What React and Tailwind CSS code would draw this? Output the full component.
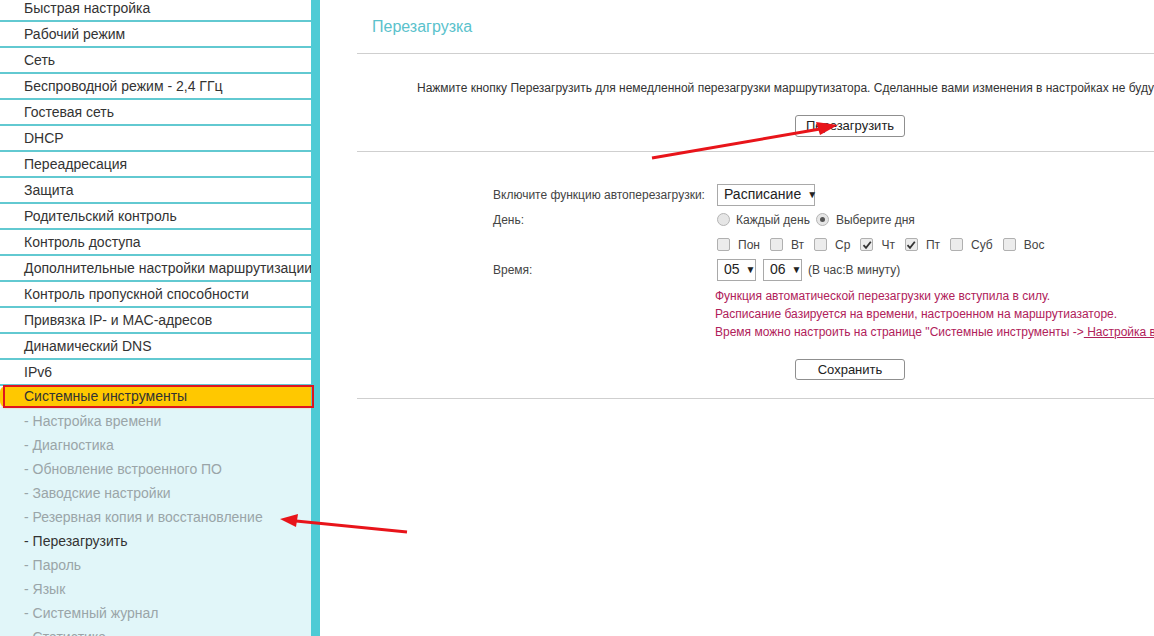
import React from "react";

const menu = [
  "Быстрая настройка",
  "Рабочий режим",
  "Сеть",
  "Беспроводной режим - 2,4 ГГц",
  "Гостевая сеть",
  "DHCP",
  "Переадресация",
  "Защита",
  "Родительский контроль",
  "Контроль доступа",
  "Дополнительные настройки маршрутизации",
  "Контроль пропускной способности",
  "Привязка IP- и MAC-адресов",
  "Динамический DNS",
  "IPv6",
];

const sub = [
  "Настройка времени",
  "Диагностика",
  "Обновление встроенного ПО",
  "Заводские настройки",
  "Резервная копия и восстановление",
  "Перезагрузить",
  "Пароль",
  "Язык",
  "Системный журнал",
  "Статистика",
];

function Radio({ checked }) {
  return (
    <span className="inline-flex w-[13px] h-[13px] rounded-full border border-[#b5b5b5] bg-[#e6e6e6] items-center justify-center">
      {checked && <span className="w-[5px] h-[5px] rounded-full bg-[#555]" />}
    </span>
  );
}

function Check({ checked }) {
  return (
    <span className="inline-flex w-[13px] h-[13px] rounded-[2px] border border-[#b0b0b0] bg-[#ececec] items-center justify-center">
      {checked && (
        <svg width="10" height="10" viewBox="0 0 10 10">
          <path d="M1.5 5.2 L4 7.8 L8.8 1.8" fill="none" stroke="#333" strokeWidth="1.8" />
        </svg>
      )}
    </span>
  );
}

function Sel({ children, w }) {
  return (
    <span className={`inline-flex items-center justify-between h-[22px] border border-[#a9a9a9] bg-white px-[6px] text-[14px] text-[#222] ${w}`}>
      <span>{children}</span>
      <span className="text-[10px] ml-[6px]">▼</span>
    </span>
  );
}

export default function App() {
  const days = [
    ["Пон", false],
    ["Вт", false],
    ["Ср", false],
    ["Чт", true],
    ["Пт", true],
    ["Суб", false],
    ["Вос", false],
  ];
  return (
    <div
      className="relative w-[1154px] h-[636px] overflow-hidden bg-white flex"
      style={{ fontFamily: '"Liberation Sans", Arial, sans-serif' }}
    >
      {/* Sidebar */}
      <div className="w-[320px] shrink-0 h-full flex border-r-[9px] border-[#4ecbd5]">
        <div className="w-[311px] flex flex-col h-full">
          <div className="-mt-[4px]">
            {menu.map((m) => (
              <div
                key={m}
                className="h-[26px] border-b-2 border-[#62c9d1] pl-[24px] flex items-center text-[14px] text-[#333] whitespace-nowrap overflow-hidden"
              >
                {m}
              </div>
            ))}
          </div>
          <div className="relative h-[24px] bg-[#ffc800] rounded-l-[6px] pl-[24px] flex items-center text-[14px] text-[#333] shadow-[0_1px_2px_rgba(230,150,0,0.5)]">
            Системные инструменты
            <div className="absolute left-[3px] -right-[3px] -top-[1px] -bottom-[1px] border-2 border-[#e0141e]" />
          </div>
          <div className="flex-1 bg-[#e1f6f9] pt-[2px]">
            {sub.map((s) => (
              <div
                key={s}
                className={`h-[24px] pl-[24px] flex items-center text-[14px] whitespace-nowrap ${
                  s === "Перезагрузить" ? "text-[#333]" : "text-[#9aa5a8]"
                }`}
              >
                - {s}
              </div>
            ))}
          </div>
        </div>
      </div>

      {/* Main */}
      <div className="flex-1 pl-[37px] overflow-hidden">
        <div className="w-[1000px]">
          <div className="h-[54px] border-b border-[#cfcfcf] pl-[15px] pt-[15px] text-[16px] text-[#5ac2cc]">
            Перезагрузка
          </div>
          <div className="h-[98px] border-b border-[#cfcfcf] relative">
            <div className="pl-[60px] pt-[25px] text-[12px] text-[#333] whitespace-nowrap">
              Нажмите кнопку Перезагрузить для немедленной перезагрузки маршрутизатора. Сделанные вами изменения в настройках не будут потеряны.
            </div>
            <div className="pl-[438px] pt-[16px]">
              <button className="w-[110px] h-[22px] border border-[#8f8f8f] rounded-[3px] bg-white text-[13px] text-[#222]">
                Перезагрузить
              </button>
            </div>
          </div>
          <div className="h-[247px] border-b border-[#cfcfcf] pt-[30px] text-[12px] text-[#444]">
            <div className="grid grid-cols-[224px_1fr] pl-[136px]">
              <div className="h-[25px] flex items-center">Включите функцию автоперезагрузки:</div>
              <div className="h-[25px] flex items-center">
                <Sel w="w-[98px]">Расписание</Sel>
              </div>
              <div className="h-[25px] flex items-center">День:</div>
              <div className="h-[25px] flex items-center gap-[6px]">
                <Radio />
                <span>Каждый день</span>
                <Radio checked />
                <span className="ml-[1px]">Выберите дня</span>
              </div>
              <div className="h-[25px]" />
              <div className="h-[25px] flex items-center">
                {days.map(([d, c]) => (
                  <span key={d} className="inline-flex items-center mr-[10px]">
                    <Check checked={c} />
                    <span className="ml-[8px]">{d}</span>
                  </span>
                ))}
              </div>
              <div className="h-[25px] flex items-center">Время:</div>
              <div className="h-[25px] flex items-center">
                <Sel w="w-[39px]">05</Sel>
                <span className="w-[7px]" />
                <Sel w="w-[39px]">06</Sel>
                <span className="ml-[6px]">(В час:В минуту)</span>
              </div>
              <div />
              <div className="pt-[5px] -ml-[2px] text-[#b0215a] leading-[18px] whitespace-nowrap">
                <div>Функция автоматической перезагрузки уже вступила в силу.</div>
                <div>Расписание базируется на времени, настроенном на маршрутиазаторе.</div>
                <div>
                  Время можно настроить на странице "Системные инструменты -&gt;
                  <span className="underline"> Настройка времени"</span>
                </div>
              </div>
            </div>
            <div className="pl-[438px] pt-[18px]">
              <button className="w-[110px] h-[21px] border border-[#8f8f8f] rounded-[3px] bg-white text-[13px] text-[#222]">
                Сохранить
              </button>
            </div>
          </div>
        </div>
      </div>

      {/* Annotation arrows */}
      <svg className="absolute inset-0 pointer-events-none" width="1154" height="636">
        <line x1="652" y1="158" x2="820" y2="129" stroke="#e8141a" strokeWidth="3" />
        <polygon points="838,125 816,122 820,135" fill="#e8141a" />
        <line x1="407" y1="532" x2="296" y2="521" stroke="#e8141a" strokeWidth="3" />
        <polygon points="280,519 298,514 296,527" fill="#e8141a" />
      </svg>
    </div>
  );
}
